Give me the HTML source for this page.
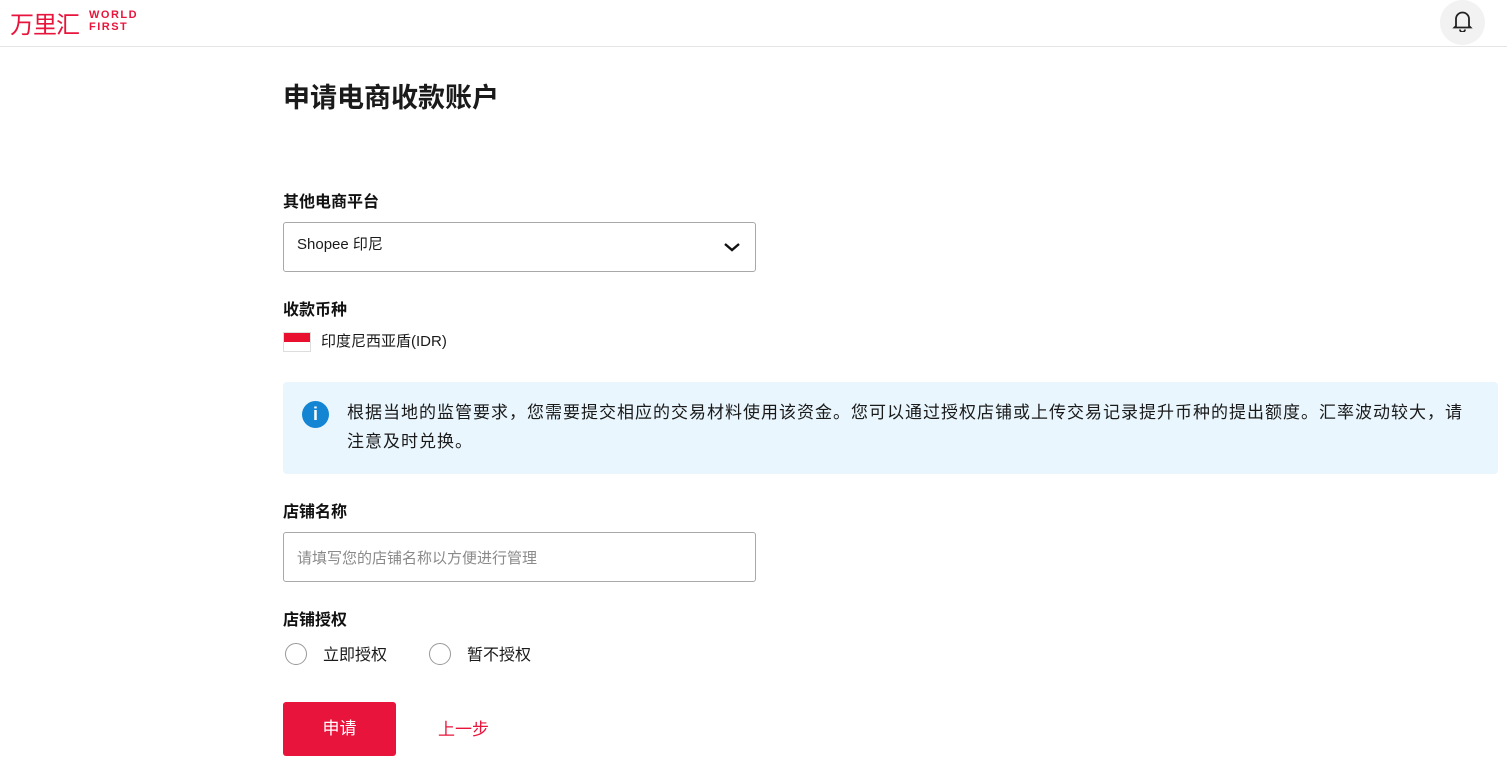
<!DOCTYPE html>
<html><head><meta charset="utf-8"><style>
body{margin:0;width:1507px;height:763px;overflow:hidden;background:#fff;font-family:"Liberation Sans","Noto Sans CJK SC",sans-serif;color:#1a1a1a;position:relative}
.a{position:absolute}
.hdr{left:0;top:0;width:1507px;height:46px;border-bottom:1px solid #e5e5e5}
.lbl{font-size:16px;font-weight:bold;color:#111}
.box{border:1px solid #a8a8a8;border-radius:3px;box-sizing:border-box}
.radio{width:22px;height:22px;border:1px solid #999;border-radius:50%;box-sizing:border-box}
</style></head><body>
<div class="a hdr"></div>
<div class="a" style="left:10px;top:5px;font-size:24px;color:#e8143c;letter-spacing:-1px">万里汇</div>
<div class="a" style="left:89px;top:9px;font-size:11px;line-height:12px;font-weight:bold;color:#e8143c;letter-spacing:1.5px">WORLD<br>FIRST</div>
<div class="a" style="left:1440px;top:0;width:45px;height:45px;border-radius:50%;background:#f2f2f2"></div>
<svg class="a" style="left:1452px;top:10px" width="21" height="22" viewBox="0 0 21 22" fill="none" stroke="#222" stroke-width="1.8"><path d="M4 16V9a6.5 6.5 0 0 1 13 0v7l1.5 1.5h-16z"/><path d="M8 19.5a2.5 2.5 0 0 0 5 0"/></svg>
<div class="a" style="left:283px;top:76px;font-size:27px;font-weight:bold">申请电商收款账户</div>
<div class="a lbl" style="left:283px;top:188px">其他电商平台</div>
<div class="a box" style="left:283px;top:222px;width:473px;height:50px"></div>
<div class="a" style="left:297px;top:233px;font-size:15px">Shopee 印尼</div>
<svg class="a" style="left:723px;top:241px" width="18" height="12"><path d="M2 3l7 6 7-6" stroke="#111" stroke-width="2.4" fill="none"/></svg>
<div class="a lbl" style="left:283px;top:296px">收款币种</div>
<div class="a" style="left:283px;top:332px;width:28px;height:20px;border:1px solid #ddd;box-sizing:border-box;background:linear-gradient(#e8102e 50%,#fff 50%)"></div>
<div class="a" style="left:321px;top:330px;font-size:15px">印度尼西亚盾(IDR)</div>
<div class="a" style="left:283px;top:382px;width:1215px;height:92px;background:#e9f6fd;border-radius:4px"></div>
<div class="a" style="left:302px;top:401px;width:27px;height:27px;border-radius:50%;background:#1485d2;color:#fff;font-weight:bold;font-size:18px;text-align:center;line-height:27px">i</div>
<div class="a" style="left:347px;top:398px;width:1145px;font-size:17px;letter-spacing:1px;line-height:29px;white-space:nowrap">根据当地的监管要求，您需要提交相应的交易材料使用该资金。您可以通过授权店铺或上传交易记录提升币种的提出额度。汇率波动较大，请<br>注意及时兑换。</div>
<div class="a lbl" style="left:283px;top:498px">店铺名称</div>
<div class="a box" style="left:283px;top:532px;width:473px;height:50px"></div>
<div class="a" style="left:297px;top:547px;font-size:15px;color:#8a8a8a">请填写您的店铺名称以方便进行管理</div>
<div class="a lbl" style="left:283px;top:606px">店铺授权</div>
<div class="a radio" style="left:285px;top:643px"></div>
<div class="a" style="left:323px;top:641px;font-size:16px">立即授权</div>
<div class="a radio" style="left:429px;top:643px"></div>
<div class="a" style="left:467px;top:641px;font-size:16px">暂不授权</div>
<div class="a" style="left:283px;top:702px;width:113px;height:54px;background:#e8143c;border-radius:3px;color:#fff;font-size:17px;text-align:center;line-height:54px">申请</div>
<div class="a" style="left:438px;top:715px;font-size:17px;color:#e8143c">上一步</div>
</body></html>
